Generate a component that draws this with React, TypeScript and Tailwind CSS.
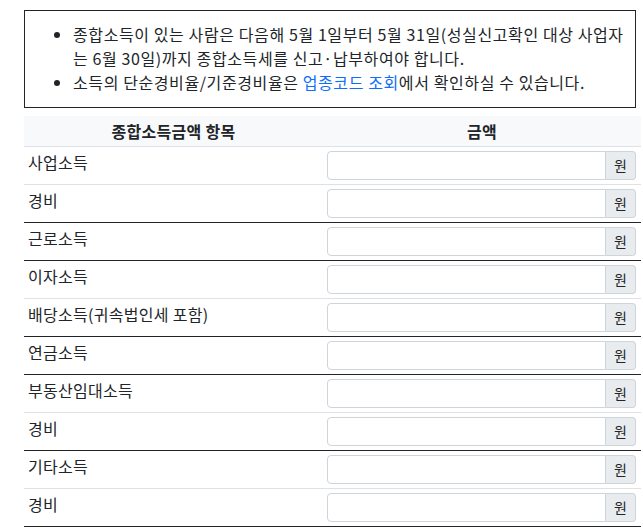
const rows: { label: string; dark: boolean }[] = [
  { label: "사업소득", dark: false },
  { label: "경비", dark: true },
  { label: "근로소득", dark: true },
  { label: "이자소득", dark: false },
  { label: "배당소득(귀속법인세 포함)", dark: true },
  { label: "연금소득", dark: true },
  { label: "부동산임대소득", dark: false },
  { label: "경비", dark: true },
  { label: "기타소득", dark: false },
  { label: "경비", dark: true },
];

function AmountInput() {
  return (
    <div className="flex h-[29px] w-full">
      <input
        type="text"
        className="min-w-0 flex-1 rounded-l-[4px] border border-[#ced4da] bg-white px-2 text-[14px] outline-none"
      />
      <span className="flex w-[30px] items-center justify-center rounded-r-[4px] border border-l-0 border-[#ced4da] bg-[#e9ecef] text-[14px] text-[#212529]">
        원
      </span>
    </div>
  );
}

export default function App() {
  return (
    <div
      className="min-h-[532px] bg-white pl-6 pt-[10px] text-[#212529]"
      style={{ fontFamily: '"Noto Sans CJK KR", "Noto Sans", sans-serif' }}
    >
      <div className="mb-2 w-[612px] border border-[#212529] pt-[11px] pb-[13px] pr-2 pl-2">
        <ul className="list-disc pl-10 text-[16px] leading-6 tracking-[0.6px]">
          <li>
            종합소득이 있는 사람은 다음해 5월 1일부터 5월 31일(성실신고확인 대상
            사업자는 6월 30일)까지 종합소득세를 신고·납부하여야 합니다.
          </li>
          <li>
            소득의 단순경비율/기준경비율은{" "}
            <a className="text-[#0d6efd]" href="#">
              업종코드 조회
            </a>
            에서 확인하실 수 있습니다.
          </li>
        </ul>
      </div>

      <table className="w-[617px] border-collapse text-[16px] tracking-[0.3px]">
        <thead>
          <tr className="border-b border-[#dee2e6] bg-[#f8f9fa]">
            <th className="w-[299px] py-[3px] text-center leading-6 font-bold">
              종합소득금액 항목
            </th>
            <th className="py-[3px] text-center leading-6 font-bold">금액</th>
          </tr>
        </thead>
        <tbody>
          {rows.map((r, i) => (
            <tr
              key={i}
              className={
                r.dark ? "border-b border-[#212529]" : "border-b border-[#dee2e6]"
              }
            >
              <td className="px-1 pt-[3px] pb-1 align-top leading-6">{r.label}</td>
              <td className="py-1 pr-[5px] pl-1">
                <AmountInput />
              </td>
            </tr>
          ))}
        </tbody>
      </table>
    </div>
  );
}
